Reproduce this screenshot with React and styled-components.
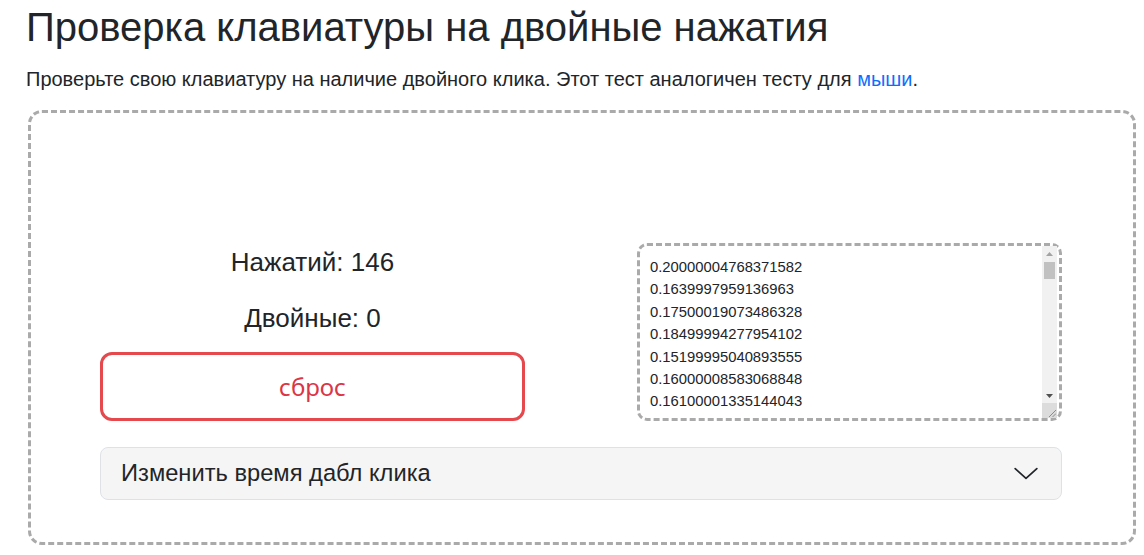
import styled, { createGlobalStyle } from 'styled-components';

const first = [
  '0.20000004768371582',
  '0.1639997959136963',
  '0.17500019073486328',
  '0.18499994277954102',
  '0.15199995040893555',
  '0.16000008583068848',
  '0.16100001335144043',
];

const rest = Array.from({ length: 139 }, (_, i) => {
  const v = 0.15 + ((i * 37) % 41) / 1000;
  return v.toFixed(17);
});

const intervals = [...first, ...rest];

const App = () => {
  return (
    <Page>
      <GlobalStyle />
      <Title>Проверка клавиатуры на двойные нажатия</Title>
      <Lead>
        Проверьте свою клавиатуру на наличие двойного клика. Этот тест аналогичен тесту для{' '}
        <Link href="#">мыши</Link>.
      </Lead>
      <TestArea>
        <Row>
          <Counters>
            <Stat>Нажатий: 146</Stat>
            <Stat>Двойные: 0</Stat>
            <ResetButton>сброс</ResetButton>
          </Counters>
          <LogBox>
            <Log readOnly value={intervals.join('\n')} />
            <Scrollbar>
              <ArrowButton>
                <svg width="7" height="4" viewBox="0 0 7 4"><path d="M0 4L3.5 0 7 4z" fill="#a3a3a3" /></svg>
              </ArrowButton>
              <Track>
                <Thumb />
              </Track>
              <ArrowButton>
                <svg width="7" height="4" viewBox="0 0 7 4"><path d="M0 0L3.5 4 7 0z" fill="#505050" /></svg>
              </ArrowButton>
              <Corner>
                <svg width="8" height="8" viewBox="0 0 8 8" stroke="#777" strokeWidth="0.8">
                  <path d="M1 8L8 1M4.5 8L8 4.5" />
                </svg>
              </Corner>
            </Scrollbar>
          </LogBox>
        </Row>
        <Accordion>
          <span>Изменить время дабл клика</span>
          <svg width="26" height="26" viewBox="0 0 24 24" fill="none" stroke="#212529" strokeWidth="1.6" strokeLinecap="round" strokeLinejoin="round">
            <path d="M2 7l10 9 10-9" />
          </svg>
        </Accordion>
      </TestArea>
    </Page>
  );
};

export default App;

const GlobalStyle = createGlobalStyle`
  body {
    margin: 0;
    background: #fff;
    color: #212529;
    font-family: "Liberation Sans", Arial, sans-serif;
  }
`;

const Page = styled.div`
  padding: 0 8px 0 26px;
`;

const Title = styled.h1`
  margin: 0;
  padding-top: 3px;
  font-size: 40px;
  font-weight: 400;
  line-height: 48px;
  color: #212529;
`;

const Lead = styled.p`
  margin: 14px 0 17px;
  font-size: 20px;
  line-height: 28px;
`;

const Link = styled.a`
  color: #0d6efd;
  text-decoration: none;
`;

const TestArea = styled.div`
  margin-left: 2px;
  border: 3px dashed #aaa;
  border-radius: 14px;
  padding: 130px 71px 42px 69px;
`;

const Row = styled.div`
  display: flex;
  justify-content: space-between;
  align-items: flex-end;
`;

const Counters = styled.div`
  width: 425px;
  display: flex;
  flex-direction: column;
  align-items: stretch;
`;

const Stat = styled.div`
  text-align: center;
  font-size: 26px;
  line-height: 30px;
  margin-bottom: 26px;

  &:nth-child(2) {
    margin-bottom: 19px;
  }
`;

const ResetButton = styled.button`
  height: 69px;
  background: #fff;
  border: 3px solid #e5484d;
  border-radius: 12px;
  color: #dc3545;
  font-family: "Noto Sans", sans-serif;
  font-size: 24px;
  cursor: pointer;
`;

const LogBox = styled.div`
  position: relative;
  width: 425px;
  height: 178px;
`;

const Log = styled.textarea`
  display: block;
  box-sizing: border-box;
  width: 100%;
  height: 100%;
  resize: none;
  border: 3px dashed #aaa;
  border-radius: 10px;
  padding: 10px 24px 10px 10px;
  font-family: "Liberation Sans", Arial, sans-serif;
  font-size: 14.8px;
  line-height: 22.4px;
  color: #212529;
  overflow: hidden;
  outline: none;
`;

const Scrollbar = styled.div`
  position: absolute;
  top: 3px;
  bottom: 3px;
  right: 5px;
  width: 15px;
  display: flex;
  flex-direction: column;
  background: #f1f1f1;
`;

const ArrowButton = styled.div`
  height: 15px;
  display: flex;
  align-items: center;
  justify-content: center;
`;

const Track = styled.div`
  flex: 1;
  padding: 1px 2px;
`;

const Thumb = styled.div`
  height: 17px;
  background: #c1c1c1;
`;

const Corner = styled.div`
  height: 15px;
  background: #dcdcdc;
  display: flex;
  align-items: flex-end;
  justify-content: flex-end;
  padding: 0 1px 1px 0;
  box-sizing: border-box;
`;

const Accordion = styled.div`
  margin-top: 26px;
  height: 53px;
  box-sizing: border-box;
  display: flex;
  align-items: center;
  justify-content: space-between;
  padding: 0 22px 0 20px;
  background: #f5f5f5;
  border: 1px solid #dee2e6;
  border-radius: 8px;
  font-size: 23.7px;
  color: #212529;
  cursor: pointer;
`;
